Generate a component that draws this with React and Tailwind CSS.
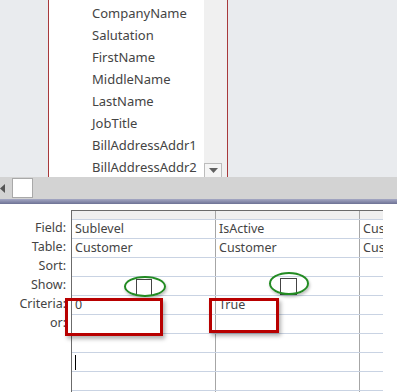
const fields = ['CompanyName', 'Salutation', 'FirstName', 'MiddleName', 'LastName', 'JobTitle', 'BillAddressAddr1', 'BillAddressAddr2'];

const labels = ['Field:', 'Table:', 'Sort:', 'Show:', 'Criteria:', 'or:'];

// grid columns: [field, table, criteria]
const columns = [
  { field: 'Sublevel', table: 'Customer', criteria: '0' },
  { field: 'IsActive', table: 'Customer', criteria: 'True' },
  { field: 'Customer', table: 'Customer', criteria: '' },
];

const ROWS = 10;

function Cell({ children, last }) {
  return (
    <div className={`h-full shrink-0 border-r border-[#a6a6a6] pl-[3px] leading-[18px] whitespace-nowrap overflow-hidden ${last ? 'w-[40px]' : 'w-[144px]'}`}>
      {children}
    </div>
  );
}

export default function App() {
  const rowValue = (col, i) => {
    if (i === 0) return col.field;
    if (i === 1) return col.table;
    if (i === 4) return col.criteria;
    return '';
  };

  return (
    <div className="relative w-[397px] h-[392px] overflow-hidden bg-white text-[12.5px] text-[#444]" style={{ fontFamily: '"Noto Sans", "Open Sans", sans-serif' }}>
      {/* table field list */}
      <div className="flex h-[177px] bg-[#e9ebee]">
        <div className="w-[48px]" />
        <div className="flex w-[180px] border-x border-[#a8393b] bg-white">
          <div className="flex-1 pl-[43px] pt-[2px] overflow-hidden text-[13px]">
            {fields.map((f) => (
              <div key={f} className="h-[22px] leading-[22px] whitespace-nowrap">{f}</div>
            ))}
          </div>
          <div className="flex w-[23px] flex-col justify-end bg-[#f0f0f0]">
            <div className="flex h-[14px] w-[18px] items-center justify-center border border-b-0 border-[#bcbcbc] bg-[#f5f5f5]">
              <svg width="9" height="5" viewBox="0 0 9 5"><path d="M0 0h9L4.5 5z" fill="#606060" /></svg>
            </div>
          </div>
        </div>
      </div>

      {/* horizontal scrollbar */}
      <div className="flex h-[22px] items-center bg-[#d3d3d3]">
        <svg width="5" height="9" viewBox="0 0 5 9" className="mr-[7px]"><path d="M5 0v9L0 4.5z" fill="#555" /></svg>
        <div className="h-[20px] w-[21px] border border-[#a9a9a9] bg-white" />
      </div>

      {/* splitter */}
      <div className="h-[5px] bg-gradient-to-b from-[#a5a8c4] to-[#6e7294]" />

      {/* design grid */}
      <div className="mt-[6px] flex">
        <div className="w-[71px] shrink-0 pt-[9px]">
          {labels.map((l) => (
            <div key={l} className="h-[19px] pr-[5px] text-right leading-[18px]">{l}</div>
          ))}
        </div>
        <div className="w-[312px] overflow-hidden border-l border-t border-[#6b6b6b]">
          <div className="flex h-[9px] border-b border-[#c9d3e3] bg-[#f0f0f0]">
            {columns.map((c, ci) => <Cell key={ci} last={ci === 2} />)}
          </div>
          {Array.from({ length: ROWS }).map((_, i) => (
            <div key={i} className="flex h-[19px] border-b border-[#c9d3e3]">
              {columns.map((c, ci) => (
                <Cell key={ci} last={ci === 2}>{rowValue(c, i)}</Cell>
              ))}
            </div>
          ))}
        </div>
      </div>

      {/* show checkboxes */}
      <div className="absolute left-[136px] top-[279px] h-[17px] w-[16px] border border-[#444] bg-white" />
      <div className="absolute left-[280px] top-[278px] h-[17px] w-[17px] border border-[#444] bg-white" />

      {/* annotations */}
      <div className="absolute left-[124px] top-[276px] h-[21px] w-[42px] rounded-[50%] border-2 border-[#238b23] shadow-[1px_2px_3px_rgba(0,0,0,0.25)]" />
      <div className="absolute left-[269px] top-[272px] h-[23px] w-[40px] rounded-[50%] border-2 border-[#238b23] shadow-[1px_2px_3px_rgba(0,0,0,0.25)]" />
      <div className="absolute left-[65px] top-[298px] h-[38px] w-[98px] border-[3px] border-[#b80000] shadow-[2px_3px_4px_rgba(0,0,0,0.3)]" />
      <div className="absolute left-[209px] top-[298px] h-[35px] w-[70px] border-[3px] border-[#b80000] shadow-[2px_3px_4px_rgba(0,0,0,0.3)]" />

      {/* text cursor */}
      <div className="absolute left-[75px] top-[355px] h-[15px] w-px bg-black" />
    </div>
  );
}
